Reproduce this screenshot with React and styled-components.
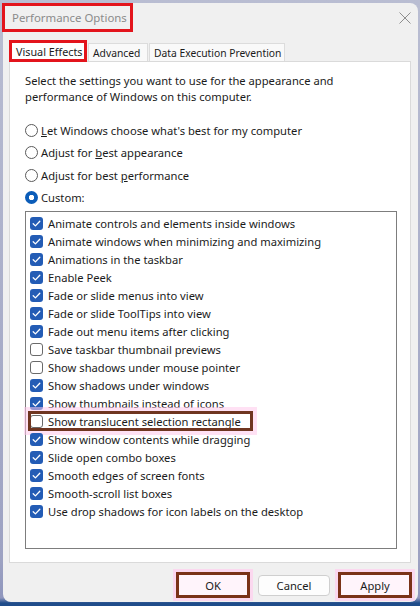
import React from "react";
import styled, { createGlobalStyle, css } from "styled-components";

const GlobalStyle = createGlobalStyle`
  html, body { margin: 0; padding: 0; }
  body {
    width: 420px;
    height: 606px;
    overflow: hidden;
    background: linear-gradient(to bottom, #b9bdd2 0px, #9da2c2 560px, #8f96bd 598px, #1f4c8a 603px);
    font-family: "Noto Sans", "Open Sans", sans-serif;
    font-size: 11.2px;
    color: #1b1b1b;
  }
`;

const Window = styled.div`
  margin: 3px 0 0 3px;
  width: 415px;
  height: 599px;
  background: #f0f0f0;
  border-radius: 8px;
  display: flex;
  flex-direction: column;
  box-sizing: border-box;
`;

const TitleBar = styled.div`
  height: 34px;
  display: flex;
  justify-content: space-between;
  align-items: flex-start;
`;

const TitleBox = styled.div`
  margin-left: -1px;
  width: 131px;
  height: 29px;
  box-sizing: border-box;
  border: 3px solid #e3141c;
  padding: 0 7px;
  display: flex;
  align-items: center;
  color: #8b8b8b;
  font-size: 11.4px;
  white-space: nowrap;
`;

const CloseButton = styled.div`
  margin: 9px 7px 0 0;
  width: 12px;
  height: 12px;
  display: flex;
`;

const TabStrip = styled.div`
  margin-top: 3px;
  height: 21px;
  padding-left: 6px;
  display: flex;
  align-items: flex-end;
  position: relative;
  z-index: 1;
`;

const Tab = styled.div`
  box-sizing: border-box;
  width: ${(p) => p.$w}px;
  display: flex;
  align-items: center;
  white-space: nowrap;
  overflow: hidden;
  font-size: 10.3px;
  ${(p) =>
    p.$active
      ? css`
          height: 22px;
          margin-bottom: -1px;
          background: #fff;
          border: 3px solid #e3141c;
          padding-left: 4px;
          font-size: 10.8px;
        `
      : css`
          height: 18px;
          background: #f9f9f9;
          border: 1px solid #dcdcdc;
          border-bottom: none;
          margin-left: 1px;
          padding-left: 4px;
        `}
`;

const Panel = styled.div`
  margin: 0 7px 0 6px;
  height: 502px;
  box-sizing: border-box;
  background: #fff;
  border: 1px solid #dadada;
  padding: 11px 0 0 15px;
  display: flex;
  flex-direction: column;
`;

const Description = styled.p`
  margin: 0;
  line-height: 16px;
`;

const RadioGroup = styled.div`
  margin-top: 14px;
  display: flex;
  flex-direction: column;
`;

const RadioRow = styled.div`
  height: 22.5px;
  display: flex;
  align-items: center;
  gap: 3px;
`;

const RadioDot = styled.span`
  width: 13px;
  height: 13px;
  box-sizing: border-box;
  border-radius: 50%;
  flex: none;
  ${(p) =>
    p.$checked
      ? css`
          background: radial-gradient(circle, #fff 0 2.4px, #0b5cb8 3px);
        `
      : css`
          background: #fff;
          border: 1px solid #5a5a5a;
        `}
`;

const Key = styled.span`
  text-decoration: underline;
`;

const ListBox = styled.div`
  margin-top: 2px;
  width: 372px;
  height: 338px;
  box-sizing: border-box;
  border: 1px solid #7d7d7d;
  padding: 2px 0 0 4px;
  display: flex;
  flex-direction: column;
`;

const CheckRow = styled.div`
  height: 18px;
  display: flex;
  align-items: center;
  gap: 5px;
  position: relative;
  white-space: nowrap;
`;

const Highlight = styled.span`
  position: absolute;
  left: -2px;
  top: -1px;
  width: 225px;
  height: 20px;
  box-sizing: border-box;
  border: 3px solid #6f3520;
  box-shadow: 0 0 0 4px rgba(255, 200, 235, 0.55);
  pointer-events: none;
`;

const Box = styled.span`
  width: 13px;
  height: 13px;
  box-sizing: border-box;
  border-radius: 3px;
  flex: none;
  display: flex;
  align-items: center;
  justify-content: center;
  ${(p) =>
    p.$checked
      ? css`
          background: #235cb5;
        `
      : css`
          background: #fff;
          border: 1px solid #6a6a6a;
        `}
`;

const ButtonRow = styled.div`
  margin-top: 9px;
  padding-right: 6px;
  height: 26px;
  display: flex;
  justify-content: flex-end;
  align-items: center;
  gap: 8px;
`;

const Button = styled.div`
  box-sizing: border-box;
  display: flex;
  align-items: center;
  justify-content: center;
  ${(p) =>
    p.$marked
      ? css`
          width: 74px;
          height: 26px;
          border: 3px solid #7a3217;
          background: #fff4fb;
          box-shadow: 0 0 0 3px rgba(255, 205, 238, 0.7);
        `
      : css`
          width: 72px;
          height: 21px;
          border: 1px solid #cfcfcf;
          border-radius: 4px;
          background: #fdfdfd;
        `}
`;

const Check = () => (
  <svg width="9" height="9" viewBox="0 0 9 9">
    <path d="M1.2 4.8 L3.4 6.9 L7.8 2.2" fill="none" stroke="#fff" strokeWidth="1.3" strokeLinecap="round" strokeLinejoin="round" />
  </svg>
);

const items = [
  ["Animate controls and elements inside windows", true],
  ["Animate windows when minimizing and maximizing", true],
  ["Animations in the taskbar", true],
  ["Enable Peek", true],
  ["Fade or slide menus into view", true],
  ["Fade or slide ToolTips into view", true],
  ["Fade out menu items after clicking", true],
  ["Save taskbar thumbnail previews", false],
  ["Show shadows under mouse pointer", false],
  ["Show shadows under windows", true],
  ["Show thumbnails instead of icons", true],
  ["Show translucent selection rectangle", false, true],
  ["Show window contents while dragging", true],
  ["Slide open combo boxes", true],
  ["Smooth edges of screen fonts", true],
  ["Smooth-scroll list boxes", true],
  ["Use drop shadows for icon labels on the desktop", true],
];

export default function App() {
  return (
    <>
      <GlobalStyle />
      <Window>
        <TitleBar>
          <TitleBox>Performance Options</TitleBox>
          <CloseButton>
            <svg width="12" height="12" viewBox="0 0 12 12">
              <path d="M0.5 0.5 L11.5 11.5 M11.5 0.5 L0.5 11.5" stroke="#8e8e8e" strokeWidth="1" fill="none" />
            </svg>
          </CloseButton>
        </TitleBar>
        <TabStrip>
          <Tab $active $w={78}>Visual Effects</Tab>
          <Tab $w={60}>Advanced</Tab>
          <Tab $w={136}>Data Execution Prevention</Tab>
        </TabStrip>
        <Panel>
          <Description>
            Select the settings you want to use for the appearance and
            <br />
            performance of Windows on this computer.
          </Description>
          <RadioGroup>
            <RadioRow>
              <RadioDot />
              <span>
                <Key>L</Key>et Windows choose what's best for my computer
              </span>
            </RadioRow>
            <RadioRow>
              <RadioDot />
              <span>
                Adjust for <Key>b</Key>est appearance
              </span>
            </RadioRow>
            <RadioRow>
              <RadioDot />
              <span>
                Adjust for best <Key>p</Key>erformance
              </span>
            </RadioRow>
            <RadioRow>
              <RadioDot $checked />
              <span>Custom:</span>
            </RadioRow>
          </RadioGroup>
          <ListBox>
            {items.map(([label, checked, marked]) => (
              <CheckRow key={label}>
                {marked && <Highlight />}
                <Box $checked={checked}>{checked && <Check />}</Box>
                <span>{label}</span>
              </CheckRow>
            ))}
          </ListBox>
        </Panel>
        <ButtonRow>
          <Button $marked>OK</Button>
          <Button>Cancel</Button>
          <Button $marked>Apply</Button>
        </ButtonRow>
      </Window>
    </>
  );
}
